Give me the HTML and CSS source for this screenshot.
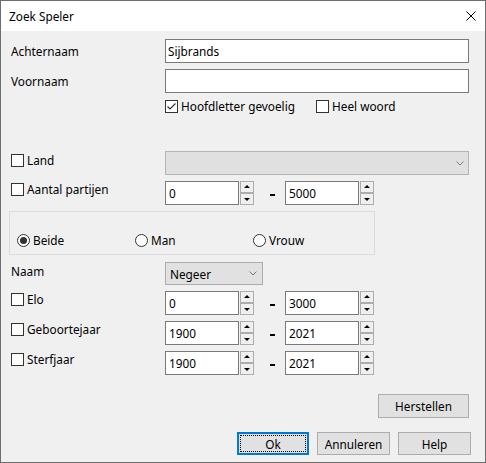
FILE: index.html
```html
<!DOCTYPE html>
<html>
<head>
    <meta charset="UTF-8">
    <title>Zoek Speler</title>
    <link rel="stylesheet" href="styles.css">
</head>
<body>
<div class="dialog">
    <div class="titlebar">
        <span>Zoek Speler</span>
        <svg class="close-icon" viewBox="0 0 10 10">
            <path d="M0.5 0.5 L9.5 9.5 M9.5 0.5 L0.5 9.5" stroke="#000" stroke-width="1" fill="none"></path>
        </svg>
    </div>

    <div class="client">
        <div class="row first">
            <div class="label plain">Achternaam</div>
            <div class="edit wide">Sijbrands</div>
        </div>
        <div class="row">
            <div class="label plain">Voornaam</div>
            <div class="edit wide"></div>
        </div>

        <div class="row options">
            <div class="label"></div>
            <label class="check opt-first">
                <span class="box">
                    <svg viewBox="0 0 11 11"><path d="M1.5 5.5 L4 8 L9.5 2.5" stroke="#333" stroke-width="1.2" fill="none"></path></svg>
                </span>
                Hoofdletter gevoelig
            </label>
            <label class="check"><span class="box"></span>Heel woord</label>
        </div>

        <div class="row land">
            <div class="label"><label class="check"><span class="box"></span>Land</label></div>
            <div class="combo disabled wide">
                <svg class="chevron" viewBox="0 0 8 5"><path d="M0.5 0.5 L4 4 L7.5 0.5" stroke="#7f7f7f" fill="none"></path></svg>
            </div>
        </div>

        <div class="row">
            <div class="label"><label class="check"><span class="box"></span>Aantal partijen</label></div>
            <div class="range">
                <div class="edit num">0</div>
                <div class="spin"><span class="up"></span><span class="down"></span></div>
                <span class="dash"></span>
                <div class="edit num">5000</div>
                <div class="spin"><span class="up"></span><span class="down"></span></div>
            </div>
        </div>

        <div class="group">
            <label class="radio"><span class="circle on"></span>Beide</label>
            <label class="radio"><span class="circle"></span>Man</label>
            <label class="radio"><span class="circle"></span>Vrouw</label>
        </div>

        <div class="row naam">
            <div class="label">Naam</div>
            <div class="combo small">
                <span>Negeer</span>
                <svg class="chevron" viewBox="0 0 8 5"><path d="M0.5 0.5 L4 4 L7.5 0.5" stroke="#7a7a7a" fill="none"></path></svg>
            </div>
        </div>

        <div class="row">
            <div class="label"><label class="check"><span class="box"></span>Elo</label></div>
            <div class="range">
                <div class="edit num">0</div>
                <div class="spin"><span class="up"></span><span class="down"></span></div>
                <span class="dash"></span>
                <div class="edit num">3000</div>
                <div class="spin"><span class="up"></span><span class="down"></span></div>
            </div>
        </div>
        <div class="row">
            <div class="label"><label class="check"><span class="box"></span>Geboortejaar</label></div>
            <div class="range">
                <div class="edit num">1900</div>
                <div class="spin"><span class="up"></span><span class="down"></span></div>
                <span class="dash"></span>
                <div class="edit num">2021</div>
                <div class="spin"><span class="up"></span><span class="down"></span></div>
            </div>
        </div>
        <div class="row">
            <div class="label"><label class="check"><span class="box"></span>Sterfjaar</label></div>
            <div class="range">
                <div class="edit num">1900</div>
                <div class="spin"><span class="up"></span><span class="down"></span></div>
                <span class="dash"></span>
                <div class="edit num">2021</div>
                <div class="spin"><span class="up"></span><span class="down"></span></div>
            </div>
        </div>

        <div class="reset-row">
            <button class="btn reset">Herstellen</button>
        </div>

        <div class="button-row">
            <button class="btn ok"><span class="focus">Ok</span></button>
            <button class="btn">Annuleren</button>
            <button class="btn">Help</button>
        </div>
    </div>
</div>
</body>
</html>
```

FILE: styles.css
```css
body {
    margin: 0;
    background: #f0f0f0;
}

.dialog {
    width: 486px;
    height: 463px;
    box-sizing: border-box;
    border: 1px solid #6d6d6d;
    background: #f0f0f0;
    font-family: "Noto Sans", sans-serif;
    font-size: 11.8px;
    line-height: 16px;
    color: #000;
    overflow: hidden;
}

.titlebar {
    height: 30px;
    background: #fff;
    display: flex;
    align-items: center;
    justify-content: space-between;
    padding: 0 9px 0 8px;
}

.close-icon {
    width: 10px;
    height: 10px;
}

.client {
    padding: 8px 16px 0 10px;
}

.row {
    display: flex;
    height: 24px;
    margin-top: 6px;
}

.row.first {
    margin-top: 0;
}

.label {
    width: 154px;
    flex-shrink: 0;
}

.label.plain {
    padding-top: 4px;
}

/* text fields */
.edit {
    box-sizing: border-box;
    height: 24px;
    background: #fff;
    border: 1px solid #7a7a7a;
    padding: 3px 2px;
    white-space: nowrap;
}

.wide {
    width: 304px;
}

.num {
    width: 74px;
    padding-left: 3px;
}

/* checkboxes and radios */
.check,
.radio {
    display: flex;
    align-items: center;
    height: 16px;
}

.box {
    box-sizing: border-box;
    width: 13px;
    height: 13px;
    border: 1px solid #333;
    background: #fff;
    margin-right: 3px;
    display: flex;
    align-items: center;
    justify-content: center;
}

.box svg {
    width: 11px;
    height: 11px;
}

.options {
    height: 16px;
    margin-top: 5px;
}

.opt-first {
    width: 151px;
}

.land {
    margin-top: 37px;
}

.land .label {
    padding-top: 1px;
}

/* combo boxes */
.combo {
    box-sizing: border-box;
    height: 24px;
    background: #e1e1e1;
    border: 1px solid #adadad;
    display: flex;
    align-items: center;
    justify-content: space-between;
    padding: 0 5px 0 4px;
}

.combo.disabled {
    background: #e0e0e0;
    border-color: #b5b5b5;
    justify-content: flex-end;
    padding-right: 4px;
}

.combo.small {
    width: 98px;
    height: 23px;
}

.chevron {
    width: 8px;
    height: 5px;
}

.naam {
    height: 23px;
    margin-top: 7px;
}

.naam .label {
    padding-top: 1px;
}

/* numeric ranges */
.range {
    display: flex;
    align-items: flex-start;
}

.spin {
    display: flex;
    flex-direction: column;
    margin-left: 1px;
    width: 14px;
    height: 24px;
}

.spin span {
    box-sizing: border-box;
    height: 12px;
    background: #f0f0f0;
    border: 1px solid #adadad;
    position: relative;
}

.spin span::after {
    content: "";
    position: absolute;
    left: 3px;
    border-left: 3px solid transparent;
    border-right: 3px solid transparent;
}

.spin .up::after {
    top: 3px;
    border-bottom: 3px solid #000;
}

.spin .down::after {
    top: 4px;
    border-top: 3px solid #000;
}

.dash {
    width: 5px;
    height: 2px;
    background: #000;
    margin: 13px 10px 0 16px;
}

/* gender group */
.group {
    box-sizing: border-box;
    margin: 6px 0 0 -2px;
    width: 366px;
    height: 44px;
    border: 1px solid #dcdcdc;
    display: flex;
    padding: 20px 0 0 7px;
}

.radio {
    width: 118px;
}

.circle {
    box-sizing: border-box;
    width: 13px;
    height: 13px;
    border: 1px solid #333;
    border-radius: 50%;
    background: #fff;
    margin-right: 3px;
    display: flex;
    align-items: center;
    justify-content: center;
}

.circle.on::after {
    content: "";
    width: 7px;
    height: 7px;
    border-radius: 50%;
    background: #333;
}

/* buttons */
.btn {
    box-sizing: border-box;
    height: 23px;
    width: 73px;
    background: #e1e1e1;
    border: 1px solid #adadad;
    font: inherit;
    color: #000;
    padding: 0;
    display: flex;
    align-items: center;
    justify-content: center;
}

.reset-row {
    display: flex;
    justify-content: flex-end;
    margin-top: 19px;
}

.btn.reset {
    width: 91px;
    height: 24px;
}

.button-row {
    display: flex;
    justify-content: flex-end;
    gap: 8px;
    margin: 14px -2px 0 0;
}

.btn.ok {
    width: 72px;
    border: 2px solid #0078d7;
    padding: 1px;
}

.focus {
    box-sizing: border-box;
    width: 100%;
    height: 100%;
    border: 1px dotted #000;
    display: flex;
    align-items: center;
    justify-content: center;
}
```
